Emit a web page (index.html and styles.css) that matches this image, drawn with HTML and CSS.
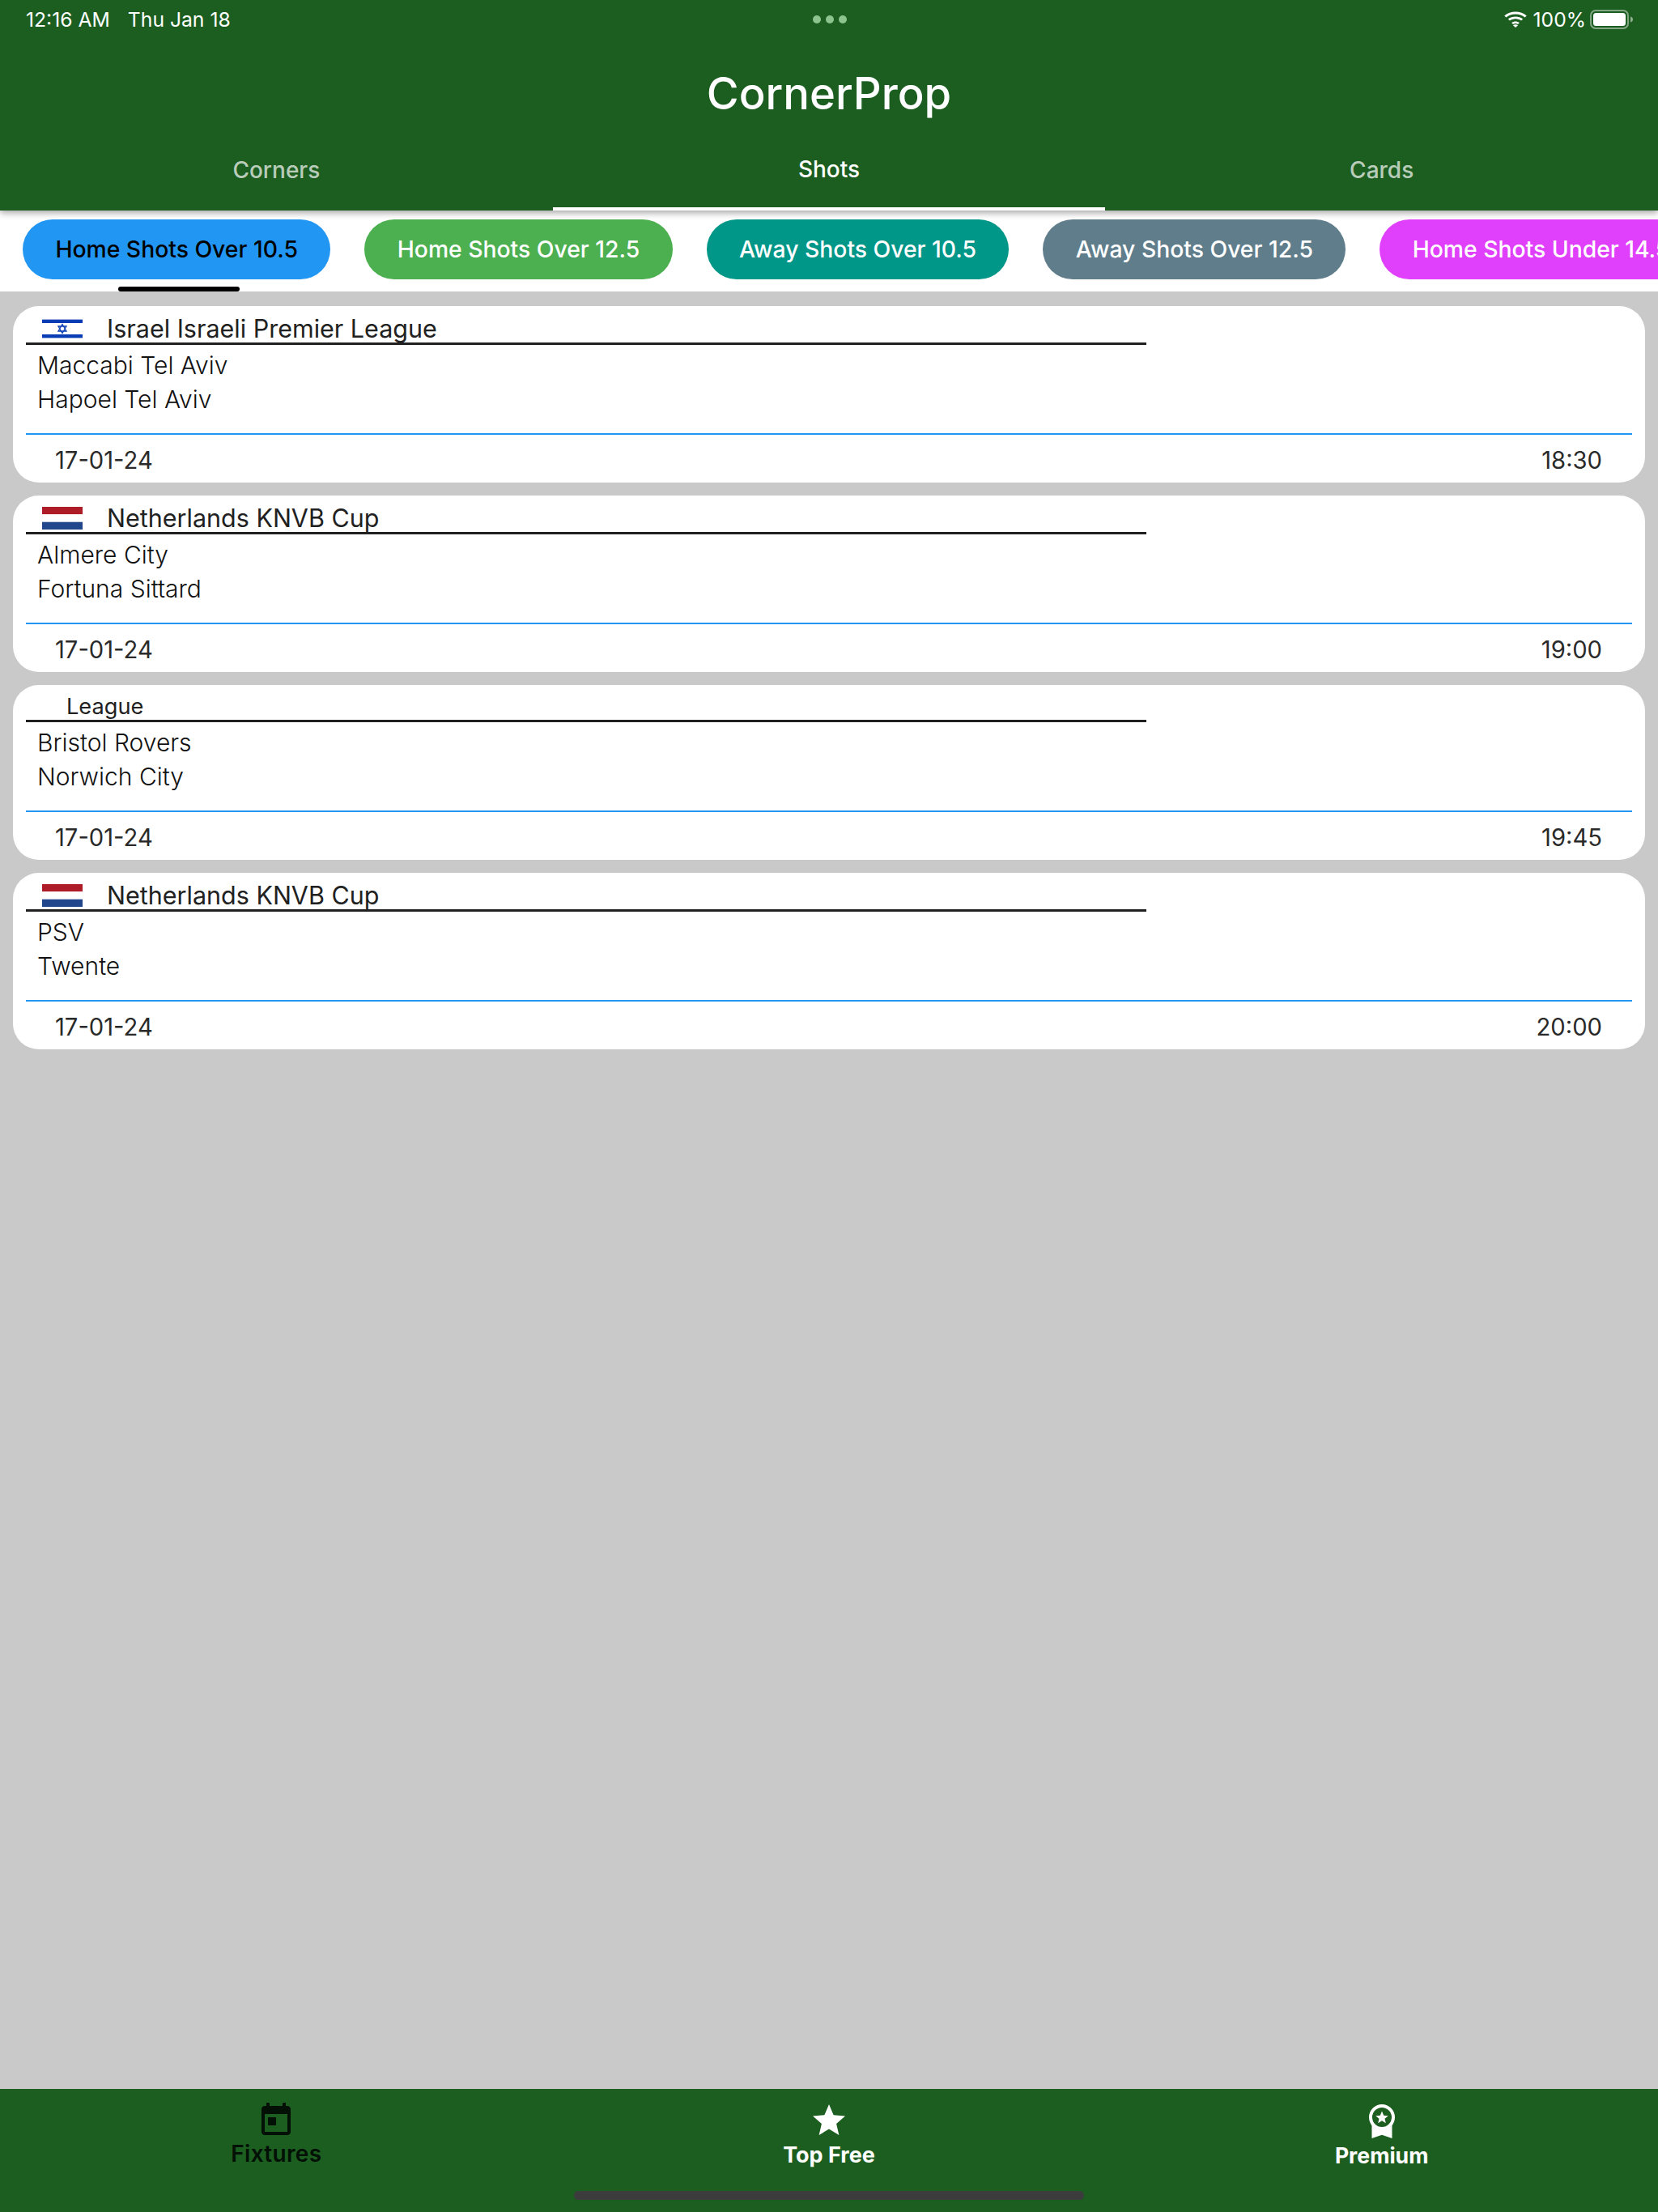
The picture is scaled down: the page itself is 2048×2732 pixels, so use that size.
FILE: index.html
```html
<!DOCTYPE html>
<html lang="en">
<head>
<meta charset="utf-8">
<title>CornerProp</title>
<link rel="stylesheet" href="styles.css">
</head>
<body>
<div class="app">
  <header class="header">
    <div class="status">
      <div class="status-left"><span>12:16 AM</span><span>Thu Jan 18</span></div>
      <div class="status-dots"><i></i><i></i><i></i></div>
      <div class="status-right">
        <svg class="wifi" width="28" height="20" viewBox="2 0 24 20" preserveAspectRatio="none"><path fill="#fff" d="M14 3.6c3.8 0 7.3 1.5 9.9 3.9l1.9-2.1C22.6 2.4 18.500.6 14 .6S5.400 2.400 2.200 5.400l1.900 2.100C6.700 5.100 10.200 3.600 14 3.600zM14 9.300c2.300 0 4.400.900 6 2.300l1.900-2.100C19.800 7.600 17 6.400 14 6.400S8.200 7.600 6.100 9.500L8 11.600c1.600-1.400 3.700-2.300 6-2.300zM14 15c1 0 1.900.400 2.600 1l1.600-1.900c-1.100-1-2.600-1.700-4.200-1.700s-3.100.700-4.200 1.700l1.600 1.900c.7-.600 1.600-1 2.600-1zM14 20l2.600-2.700c-.7-.600-1.600-1-2.600-1s-1.900.400-2.600 1z"/></svg>
        <span class="pct">100%</span>
        <svg class="battery" width="54" height="24" viewBox="0 0 54 24"><rect x="1" y="1" width="46" height="22" rx="6" fill="none" stroke="#fff" stroke-opacity=".45" stroke-width="2"/><rect x="4" y="4" width="40" height="16" rx="3.500" fill="#fff"/><path d="M50 8.500c2 .500 3 1.800 3 3.500s-1 3-3 3.500z" fill="#fff" fill-opacity=".5"/></svg>
      </div>
    </div>
    <h1 class="title">CornerProp</h1>
    <nav class="tabs">
      <div class="tab">Corners</div>
      <div class="tab tab-active">Shots</div>
      <div class="tab">Cards</div>
    </nav>
  </header>

  <div class="chips">
    <div class="chip-item">
      <div class="chip chip-blue">Home Shots Over 10.5</div>
      <div class="chip-marker"></div>
    </div>
    <div class="chip-item"><div class="chip chip-green">Home Shots Over 12.5</div></div>
    <div class="chip-item"><div class="chip chip-teal">Away Shots Over 10.5</div></div>
    <div class="chip-item"><div class="chip chip-slate">Away Shots Over 12.5</div></div>
    <div class="chip-item"><div class="chip chip-pink">Home Shots Under 14.5</div></div>
  </div>

  <main class="list">
    <article class="card">
      <div class="league">
        <svg class="flag flag-il" width="50" height="24" viewBox="0 0 50 24"><rect width="50" height="24" fill="#fff"/><rect y="1" width="50" height="4" fill="#0a3cb5"/><rect y="19" width="50" height="4" fill="#0a3cb5"/><rect width="50" height="1" fill="#9fb2e0"/><rect y="23" width="50" height="1" fill="#9fb2e0"/><path d="M25 6.500l5 8.500H20zM25 17.500l-5-8.500h10z" fill="none" stroke="#0a3cb5" stroke-width="1.300"/></svg>
        <span class="league-name">Israel Israeli Premier League</span>
      </div>
      <div class="teams"><div>Maccabi Tel Aviv</div><div>Hapoel Tel Aviv</div></div>
      <div class="meta"><span>17-01-24</span><span>18:30</span></div>
    </article>

    <article class="card">
      <div class="league">
        <svg class="flag" width="50" height="28" viewBox="0 0 50 28"><rect width="50" height="9.300" fill="#ae1c28"/><rect y="9.300" width="50" height="9.400" fill="#fff"/><rect y="18.700" width="50" height="9.300" fill="#21468b"/></svg>
        <span class="league-name">Netherlands KNVB Cup</span>
      </div>
      <div class="teams"><div>Almere City</div><div>Fortuna Sittard</div></div>
      <div class="meta"><span>17-01-24</span><span>19:00</span></div>
    </article>

    <article class="card">
      <div class="league league-plain">
        <span class="league-name-small">League</span>
      </div>
      <div class="teams"><div>Bristol Rovers</div><div>Norwich City</div></div>
      <div class="meta"><span>17-01-24</span><span>19:45</span></div>
    </article>

    <article class="card">
      <div class="league">
        <svg class="flag" width="50" height="28" viewBox="0 0 50 28"><rect width="50" height="9.300" fill="#ae1c28"/><rect y="9.300" width="50" height="9.400" fill="#fff"/><rect y="18.700" width="50" height="9.300" fill="#21468b"/></svg>
        <span class="league-name">Netherlands KNVB Cup</span>
      </div>
      <div class="teams"><div>PSV</div><div>Twente</div></div>
      <div class="meta"><span>17-01-24</span><span>20:00</span></div>
    </article>
  </main>

  <footer class="bottom">
    <div class="bottom-item bottom-dark">
      <svg class="bottom-icon" width="48" height="48" viewBox="0 0 24 24"><path fill="currentColor" d="M19 3h-1V1h-2v2H8V1H6v2H5c-1.110 0-1.990.900-1.990 2L3 19c0 1.100.890 2 2 2h14c1.100 0 2-.900 2-2V5c0-1.100-.900-2-2-2zm0 16H5V8h14v11zM7 10h5v5H7z"/></svg>
      <span class="bottom-label label-fixtures">Fixtures</span>
    </div>
    <div class="bottom-item">
      <svg class="bottom-icon" width="48" height="48" viewBox="0 0 24 24"><path fill="currentColor" d="M12 17.270L18.180 21l-1.640-7.030L22 9.240l-7.190-.610L12 2 9.190 8.630 2 9.240l5.460 4.730L5.820 21z"/></svg>
      <span class="bottom-label label-free">Top Free</span>
    </div>
    <div class="bottom-item">
      <svg class="bottom-icon" width="48" height="48" viewBox="0 0 48 48"><path fill="#fff" d="M11.500 26h25v20L24 41.700 11.500 46z"/><circle cx="24" cy="20" r="14" fill="#1c5e20" stroke="#fff" stroke-width="4"/><path fill="#fff" d="M24 12.500l2.200 5.300 5.500.400-4.200 3.600 1.300 5.500-4.800-3-4.800 3 1.300-5.500-4.200-3.600 5.500-.400z"/></svg>
      <span class="bottom-label label-premium">Premium</span>
    </div>
    <div class="home-bar"></div>
  </footer>
</div>
</body>
</html>
```
FILE: styles.css
```css
* { box-sizing: border-box; }
html, body { margin: 0; padding: 0; }
body { font-family: Inter, "Liberation Sans", sans-serif; background: #c9c9c9; color: #212121; }
.app { width: 2048px; height: 2732px; display: flex; flex-direction: column; overflow: hidden; }

.header { background: #1c5e20; color: #fff; position: relative; z-index: 2; box-shadow: 0 3px 8px rgba(0,0,0,.35); height: 260px; display: flex; flex-direction: column; }
.status { height: 46px; display: grid; grid-template-columns: 1fr auto 1fr; align-items: center; padding: 1px 30px 0 32px; font-size: 24.7px; }
.status-left { display: flex; gap: 22px; }
.status-dots { display: flex; gap: 6px; }
.status-dots i { width: 10px; height: 10px; border-radius: 50%; background: #8cc48e; display: block; }
.status-right { display: flex; justify-content: flex-end; align-items: center; gap: 8px; }
.pct { margin-right: -3px; }
.title { margin: 23px 0 0; height: 92px; font-size: 54.4px; line-height: 92px; font-weight: 500; text-align: center; }
.tabs { display: grid; grid-template-columns: repeat(3, 1fr); flex: 1; }
.tab { display: flex; align-items: center; justify-content: center; font-size: 28px; font-weight: 500; color: rgba(255,255,255,.7); padding-bottom: 2px; }
.tab-active { color: #fff; border-bottom: 4px solid #fff; padding-bottom: 0; }

.chips { height: 100px; background: #fff; display: flex; gap: 42px; padding: 11px 0 0 28px; overflow: hidden; flex: none; }
.chip-item { display: flex; flex-direction: column; align-items: center; flex: none; }
.chip { height: 74px; border-radius: 37px; padding: 0 40.4px 1px; display: flex; align-items: center; font-size: 28.3px; font-weight: 450; color: #fff; white-space: nowrap; }
.chip-blue { background: #2196f3; color: #000; }
.chip-green { background: #4caf50; }
.chip-teal { background: #009688; }
.chip-slate { background: #607d8b; }
.chip-pink { background: #e040fb; }
.chip-marker { width: 150px; height: 6px; background: #000; border-radius: 3px; margin: 9px 0 0 6px; }

.list { flex: 1; display: flex; flex-direction: column; gap: 16px; padding: 18px 16px 0; }
.card { background: #fff; border-radius: 32px; padding: 0 16px; }
.league { width: 1384px; height: 48px; padding: 10px 0 0 20px; border-bottom: 3px solid #212121; display: flex; align-items: center; gap: 30px; }
.flag-il { margin-top: 1px; }
.league-plain { height: 46px; padding: 9px 0 0 50px; }
.league-name { font-size: 30.5px; font-weight: 400; }
.league-name-small { font-size: 27.2px; font-weight: 400; }
.flag { display: block; flex: none; }
.teams { height: 109px; padding: 4px 0 0 14px; font-size: 30px; font-weight: 275; line-height: 42px; color: #111; }
.meta { border-top: 2px solid #2196f3; height: 61px; display: flex; justify-content: space-between; align-items: center; padding: 3px 37px 0 36px; font-size: 29.2px; color: #2a2a2a; }

.bottom { height: 152px; flex: none; background: #1c5e20; color: #fff; display: grid; grid-template-columns: repeat(3, 1fr); position: relative; }
.bottom-item { display: flex; flex-direction: column; align-items: center; padding-top: 15px; }
.bottom-dark { color: #021006; }
.bottom-icon { display: block; flex: none; }
.bottom-label { font-size: 28px; font-weight: 700; line-height: 34px; }
.label-fixtures { margin-top: 0; font-weight: 600; letter-spacing: .3px; }
.label-free { margin-top: 2px; font-size: 27px; }
.label-premium { margin-top: 2px; font-size: 26.6px; }
.home-bar { position: absolute; left: 709px; bottom: 15px; width: 630px; height: 11px; background: #3c3c3c; border-radius: 6px; }
```
